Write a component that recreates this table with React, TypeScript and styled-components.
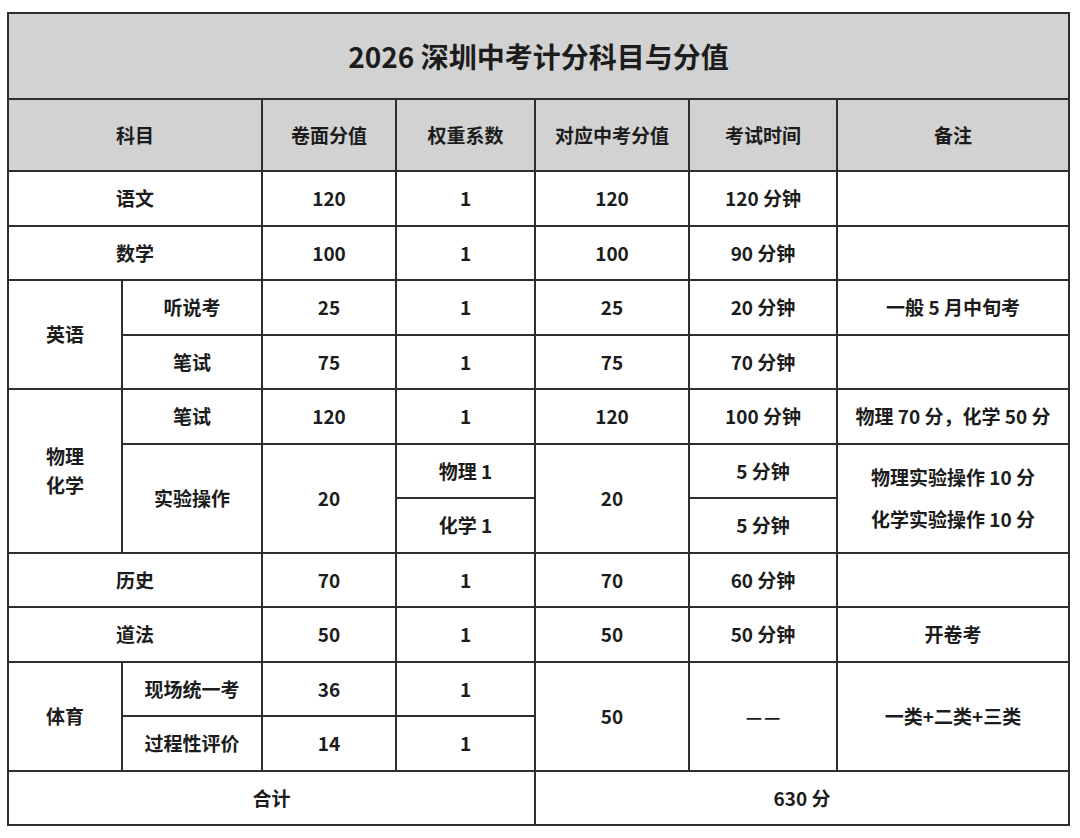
import React from "react";
import styled, { createGlobalStyle } from "styled-components";

const Global = createGlobalStyle`
  html, body { margin: 0; padding: 0; background: #ffffff; }
  body { font-family: "Noto Sans CJK SC", "Noto Sans", sans-serif; color: #1a1a1a; }
`;

const Page = styled.div`
  padding: 12px 0 0 7px;
`;

const Table = styled.table`
  border-collapse: collapse;
  table-layout: fixed;
  width: 1061px;
  border: 2px solid #2e2e2e;
`;

const Cell = styled.td<{ $h?: number; $head?: boolean }>`
  border: 2px solid #2e2e2e;
  text-align: center;
  vertical-align: middle;
  padding: 0;
  height: ${(p) => (p.$h ? `${p.$h}px` : "auto")};
  background: ${(p) => (p.$head ? "#d2d2d2" : "#ffffff")};
  font-size: 19px;
  font-weight: 700;
  line-height: 1.5;
  color: #1c1c1c;
`;

const Title = styled(Cell)`
  font-size: 28px;
  background: #d2d2d2;
`;

const Stack = styled.div`
  display: flex;
  flex-direction: column;
  gap: 13px;
`;

const DashPair = styled.span`
  display: inline-flex;
  gap: 2px;
  align-items: center;
  font-size: 18px;
`;

const widths = [114, 140, 134, 139, 154, 148, 232];
const R = 52.5;

export default function App() {
  return (
    <>
      <Global />
      <Page>
        <Table>
          <colgroup>
            {widths.map((w, i) => (
              <col key={i} style={{ width: w }} />
            ))}
          </colgroup>
          <tbody>
            <tr>
              <Title colSpan={7} $h={84}>2026 深圳中考计分科目与分值</Title>
            </tr>
            <tr>
              <Cell $head colSpan={2} $h={70}>科目</Cell>
              <Cell $head>卷面分值</Cell>
              <Cell $head>权重系数</Cell>
              <Cell $head>对应中考分值</Cell>
              <Cell $head>考试时间</Cell>
              <Cell $head>备注</Cell>
            </tr>
            <tr>
              <Cell colSpan={2} $h={R}>语文</Cell>
              <Cell>120</Cell>
              <Cell>1</Cell>
              <Cell>120</Cell>
              <Cell>120 分钟</Cell>
              <Cell></Cell>
            </tr>
            <tr>
              <Cell colSpan={2} $h={R}>数学</Cell>
              <Cell>100</Cell>
              <Cell>1</Cell>
              <Cell>100</Cell>
              <Cell>90 分钟</Cell>
              <Cell></Cell>
            </tr>
            <tr>
              <Cell rowSpan={2}>英语</Cell>
              <Cell $h={R}>听说考</Cell>
              <Cell>25</Cell>
              <Cell>1</Cell>
              <Cell>25</Cell>
              <Cell>20 分钟</Cell>
              <Cell>一般 5 月中旬考</Cell>
            </tr>
            <tr>
              <Cell $h={R}>笔试</Cell>
              <Cell>75</Cell>
              <Cell>1</Cell>
              <Cell>75</Cell>
              <Cell>70 分钟</Cell>
              <Cell></Cell>
            </tr>
            <tr>
              <Cell rowSpan={3}>
                物理
                <br />
                化学
              </Cell>
              <Cell $h={R}>笔试</Cell>
              <Cell>120</Cell>
              <Cell>1</Cell>
              <Cell>120</Cell>
              <Cell>100 分钟</Cell>
              <Cell>物理 70 分，化学 50 分</Cell>
            </tr>
            <tr>
              <Cell rowSpan={2}>实验操作</Cell>
              <Cell rowSpan={2}>20</Cell>
              <Cell $h={R}>物理 1</Cell>
              <Cell rowSpan={2}>20</Cell>
              <Cell>5 分钟</Cell>
              <Cell rowSpan={2}>
                <Stack>
                  <span>物理实验操作 10 分</span>
                  <span>化学实验操作 10 分</span>
                </Stack>
              </Cell>
            </tr>
            <tr>
              <Cell $h={R}>化学 1</Cell>
              <Cell>5 分钟</Cell>
            </tr>
            <tr>
              <Cell colSpan={2} $h={R}>历史</Cell>
              <Cell>70</Cell>
              <Cell>1</Cell>
              <Cell>70</Cell>
              <Cell>60 分钟</Cell>
              <Cell></Cell>
            </tr>
            <tr>
              <Cell colSpan={2} $h={R}>道法</Cell>
              <Cell>50</Cell>
              <Cell>1</Cell>
              <Cell>50</Cell>
              <Cell>50 分钟</Cell>
              <Cell>开卷考</Cell>
            </tr>
            <tr>
              <Cell rowSpan={2}>体育</Cell>
              <Cell $h={R}>现场统一考</Cell>
              <Cell>36</Cell>
              <Cell>1</Cell>
              <Cell rowSpan={2}>50</Cell>
              <Cell rowSpan={2}>
                <DashPair>
                  <span>—</span>
                  <span>—</span>
                </DashPair>
              </Cell>
              <Cell rowSpan={2}>一类+二类+三类</Cell>
            </tr>
            <tr>
              <Cell $h={R}>过程性评价</Cell>
              <Cell>14</Cell>
              <Cell>1</Cell>
            </tr>
            <tr>
              <Cell colSpan={4} $h={R}>合计</Cell>
              <Cell colSpan={3}>630 分</Cell>
            </tr>
          </tbody>
        </Table>
      </Page>
    </>
  );
}
